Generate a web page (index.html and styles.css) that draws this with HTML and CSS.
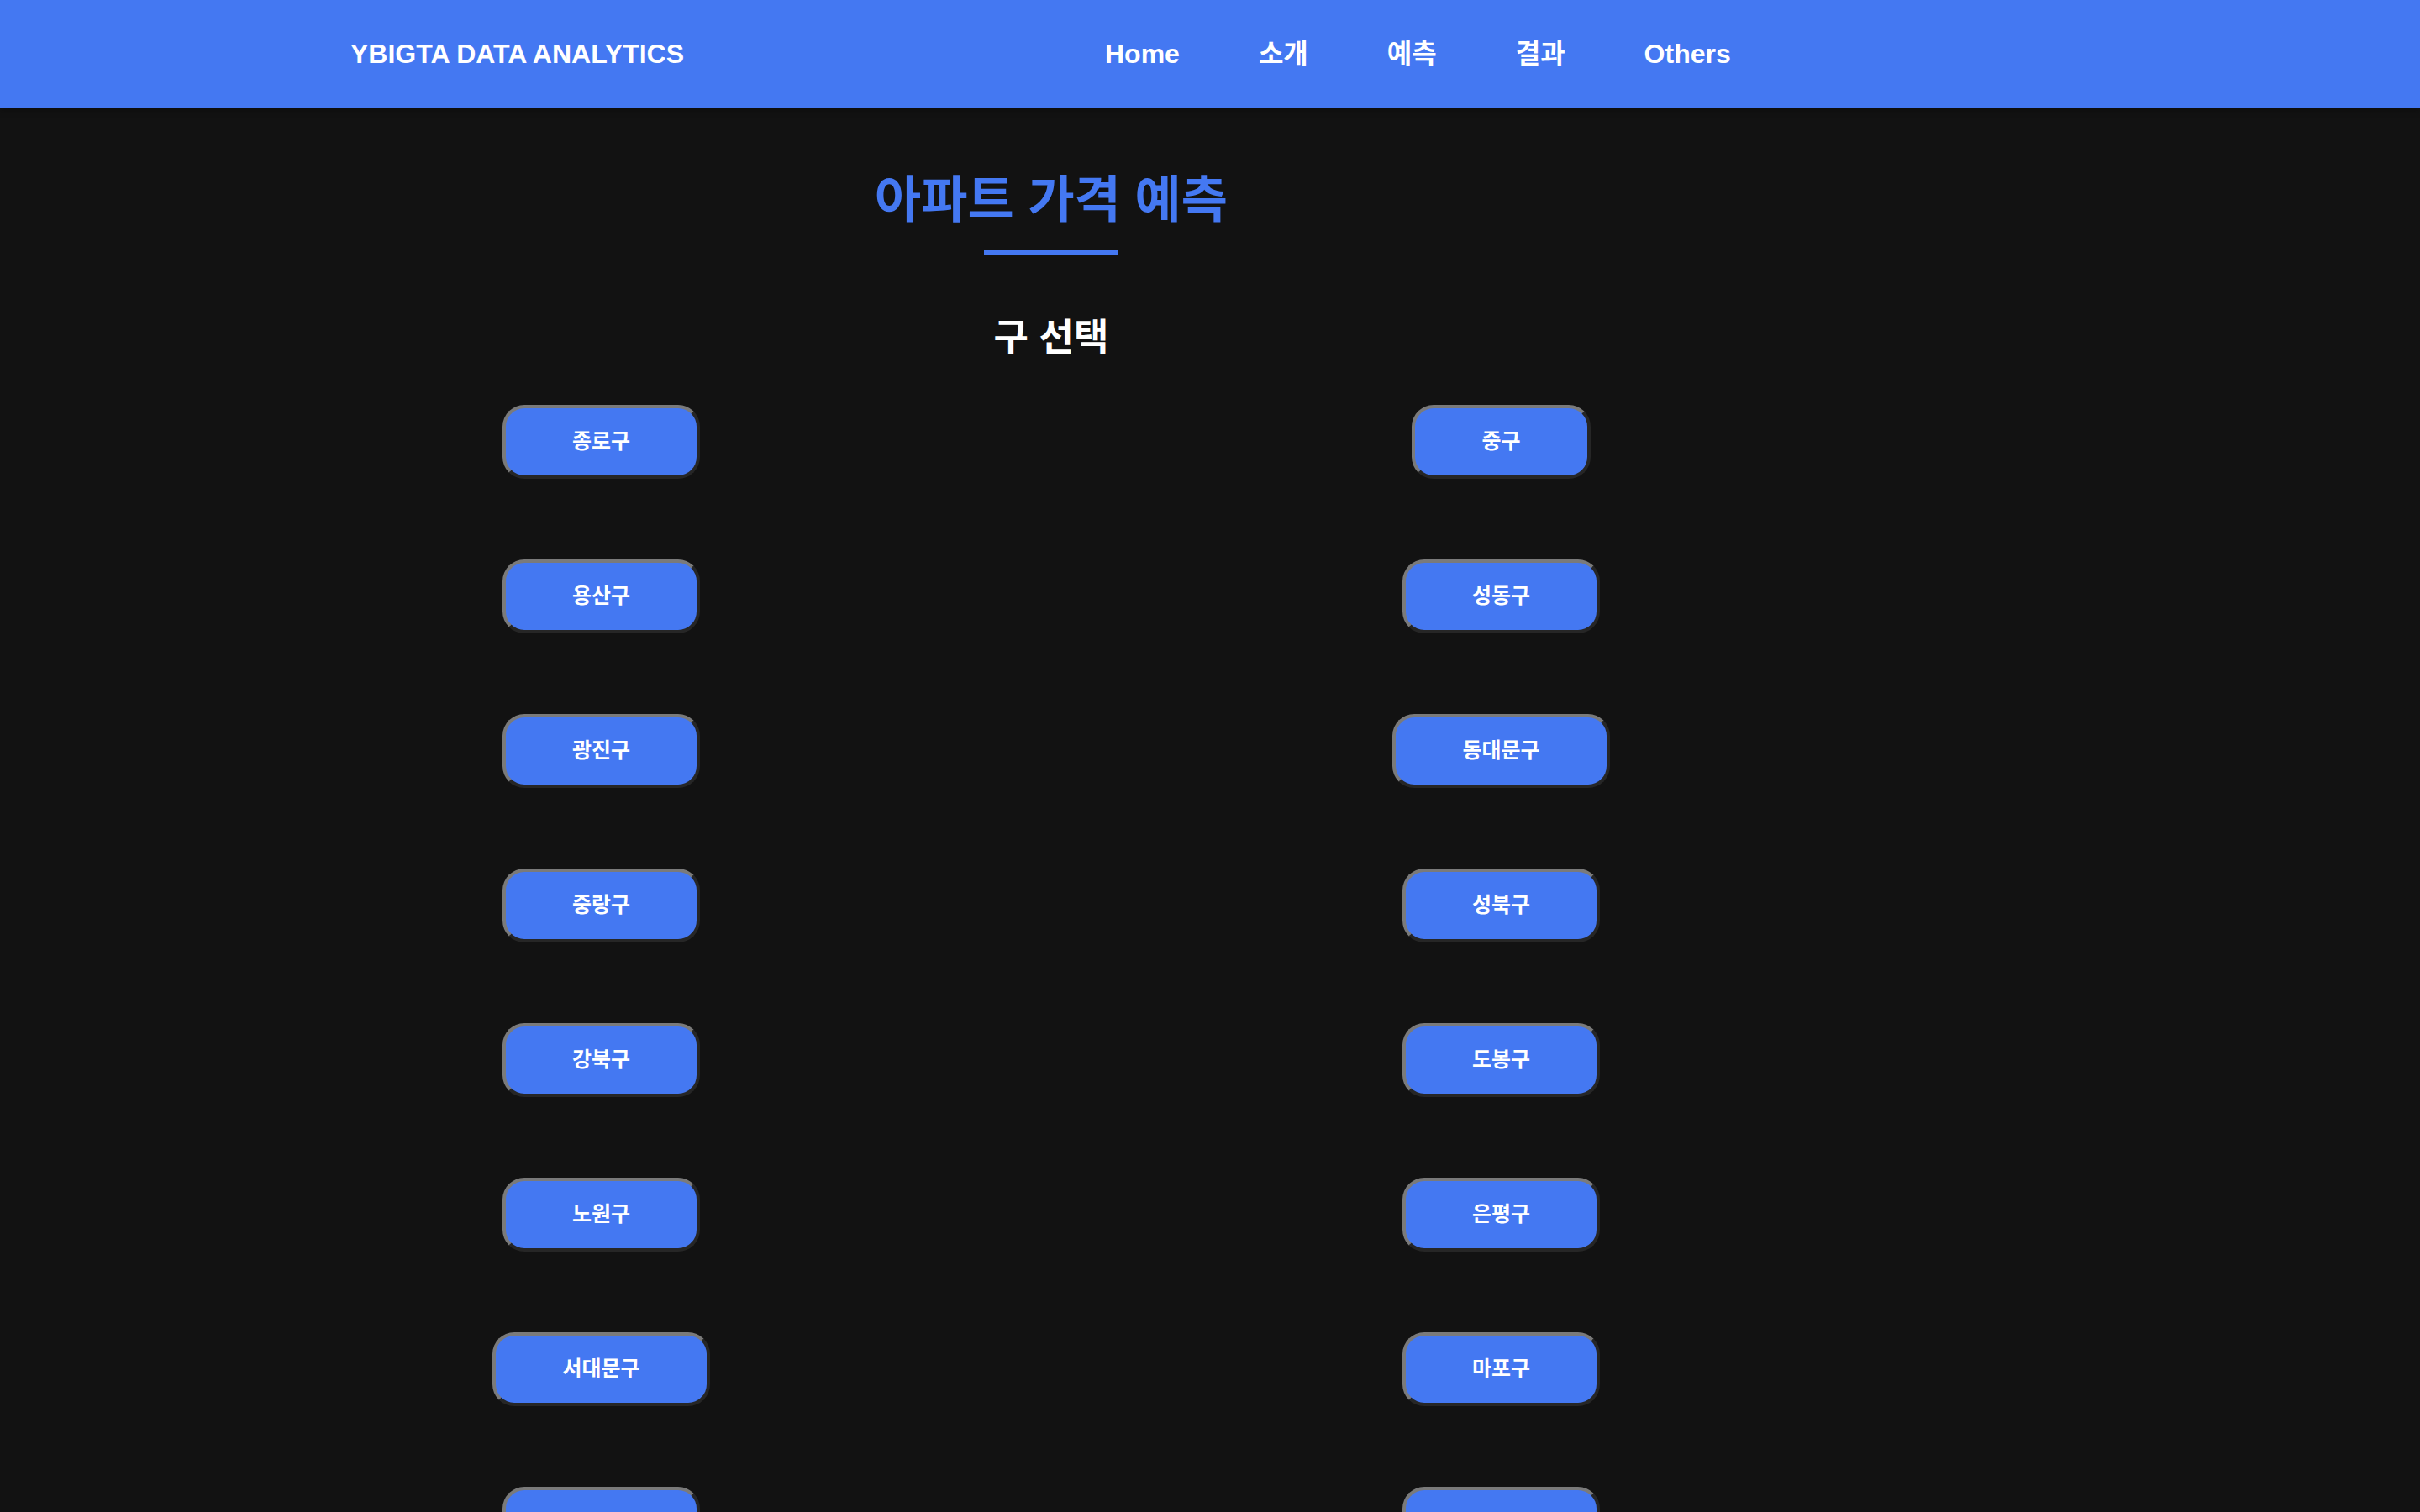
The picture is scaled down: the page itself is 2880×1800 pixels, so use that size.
FILE: index.html
```html
<!DOCTYPE html>
<html lang="ko">
<head>
<meta charset="utf-8">
<title>YBIGTA DATA ANALYTICS</title>
<link rel="stylesheet" href="styles.css">
</head>
<body>
<header class="topbar">
  <div class="logo">YBIGTA DATA ANALYTICS</div>
  <nav class="nav">
    <a class="nav-link" href="#">Home</a>
    <a class="nav-link" href="#">소개</a>
    <a class="nav-link" href="#">예측</a>
    <a class="nav-link" href="#">결과</a>
    <a class="nav-link" href="#">Others</a>
  </nav>
</header>
<main class="content">
  <h1 class="title">아파트 가격 예측</h1>
  <div class="title-rule"></div>
  <h2 class="subtitle">구 선택</h2>
  <div class="district-grid">
    <div class="cell"><button class="district">종로구</button></div>
    <div class="cell"><button class="district">중구</button></div>
    <div class="cell"><button class="district">용산구</button></div>
    <div class="cell"><button class="district">성동구</button></div>
    <div class="cell"><button class="district">광진구</button></div>
    <div class="cell"><button class="district">동대문구</button></div>
    <div class="cell"><button class="district">중랑구</button></div>
    <div class="cell"><button class="district">성북구</button></div>
    <div class="cell"><button class="district">강북구</button></div>
    <div class="cell"><button class="district">도봉구</button></div>
    <div class="cell"><button class="district">노원구</button></div>
    <div class="cell"><button class="district">은평구</button></div>
    <div class="cell"><button class="district">서대문구</button></div>
    <div class="cell"><button class="district">마포구</button></div>
    <div class="cell"><button class="district">양천구</button></div>
    <div class="cell"><button class="district">강서구</button></div>
    <div class="cell"><button class="district">구로구</button></div>
    <div class="cell"><button class="district">금천구</button></div>
    <div class="cell"><button class="district">영등포구</button></div>
    <div class="cell"><button class="district">동작구</button></div>
    <div class="cell"><button class="district">관악구</button></div>
    <div class="cell"><button class="district">서초구</button></div>
    <div class="cell"><button class="district">강남구</button></div>
    <div class="cell"><button class="district">송파구</button></div>
    <div class="cell"><button class="district">강동구</button></div>
  </div>
</main>
</body>
</html>
```

FILE: styles.css
```css
html {
  scrollbar-width: none;
}
html::-webkit-scrollbar {
  display: none;
}
body {
  margin: 0;
  background: #121212;
  color: #ffffff;
  font-family: "Liberation Sans", "Noto Sans CJK KR", sans-serif;
}

.topbar {
  height: 128px;
  background: #4478f2;
  display: grid;
  grid-template-columns: 898px auto;
  align-items: baseline;
  padding-left: 417px;
  padding-top: 48px;
  box-sizing: border-box;
  box-shadow: 0 3px 8px rgba(0, 0, 0, 0.35);
}
.logo {
  font-size: 32px;
  line-height: 1;
  font-weight: bold;
  color: #ffffff;
  white-space: nowrap;
}
.nav {
  display: flex;
  align-items: baseline;
  gap: 94px;
}
.nav-link {
  font-size: 32px;
  line-height: 1;
  font-weight: bold;
  color: #ffffff;
  text-decoration: none;
  white-space: nowrap;
}

.content {
  margin-left: 180px;
  width: 2142px;
  display: flex;
  flex-direction: column;
  align-items: center;
  font-family: "Noto Sans CJK KR", "Liberation Sans", sans-serif;
}
.title {
  margin: 75px 0 0;
  font-size: 60px;
  line-height: 60px;
  font-weight: bold;
  color: #4478f2;
}
.title-rule {
  margin-top: 35px;
  width: 160px;
  height: 6px;
  background: #4478f2;
}
.subtitle {
  margin: 72px 0 0;
  font-size: 45px;
  line-height: 45px;
  font-weight: bold;
  color: #ffffff;
}
.district-grid {
  margin-top: 61px;
  width: 100%;
  display: grid;
  grid-template-columns: 1fr 1fr;
  row-gap: 96px;
}
.cell {
  display: flex;
  justify-content: center;
}
.district {
  height: 88px;
  box-sizing: border-box;
  padding: 0 79px 6px;
  border-width: 4px;
  border-style: solid;
  border-color: #7a7a7a #262626 #262626 #7a7a7a;
  border-radius: 26px;
  background: #4478f2;
  color: #ffffff;
  font-family: "Noto Sans CJK KR", "Liberation Sans", sans-serif;
  font-size: 25px;
  font-weight: bold;
  line-height: 1;
  cursor: pointer;
}
```
